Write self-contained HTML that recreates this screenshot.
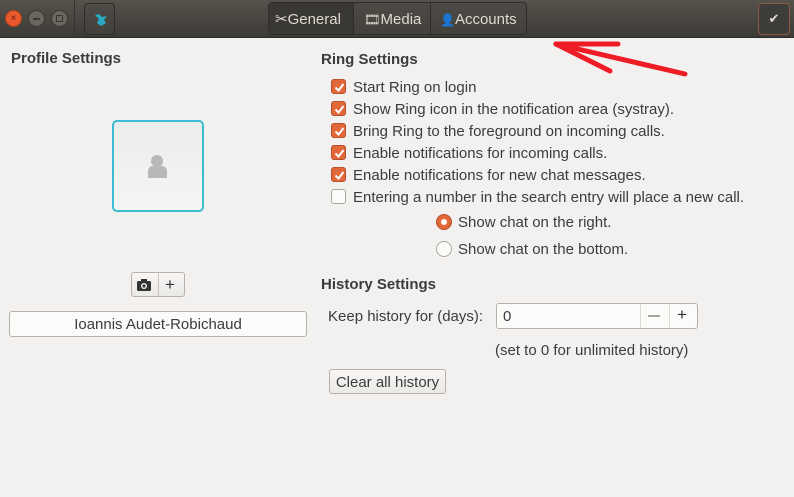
<!DOCTYPE html>
<html><head><meta charset="utf-8"><style>
*{box-sizing:border-box;margin:0;padding:0}
body{width:794px;height:497px;background:#f2f1f0;font-family:"Liberation Sans","DejaVu Sans",sans-serif;font-size:15px;color:#3c3c3c;position:relative;overflow:hidden}
.a{position:absolute;white-space:nowrap}
.hdr{left:0;top:0;width:794px;height:38px;background:linear-gradient(#55524c,#3d3b37);border-bottom:1px solid #2c2b28}
.wb{width:17px;height:17px;border-radius:50%;top:10px;background:#6a675f;border:1px solid #3a3834}
.hb{border:1px solid #2f2d2a;border-radius:4px;background:linear-gradient(#4e4b46,#43413c)}
.tab{top:3px;height:33px;color:#dfdbd2;font-size:15px;line-height:33px;padding-left:6px}
.cb{width:15px;height:15px;border-radius:3px;background:#e2683a;border:1px solid #b5502c;left:331px}
.cb svg{position:absolute;left:1px;top:1px}
.cb.off{background:#fbfbfa;border:1px solid #aaa6a0}
.lbl{left:353px}
.btn{border:1px solid #b6b1aa;border-radius:3px;background:linear-gradient(#f8f7f6,#ebe9e6)}
h3{font-size:15px;font-weight:bold;color:#3c3c3c}
</style></head><body>
<div class="a hdr"></div>
<div class="a wb" style="left:5px;background:#e9592d;border-color:#a8401e;color:#5a1d0a;font-size:10px;line-height:15px;text-align:center">×</div>
<div class="a wb" style="left:28px"><div style="position:absolute;left:4px;top:7px;width:7px;height:1.5px;background:#3a3833"></div></div>
<div class="a wb" style="left:51px"><div style="position:absolute;left:4px;top:4px;width:7px;height:7px;border:1.5px solid #3a3833"></div></div>
<div class="a" style="left:74px;top:0;width:1px;height:38px;background:#35332f"></div>
<div class="a hb" style="left:84px;top:3px;width:31px;height:32px"><svg width="31" height="32" viewBox="0 0 31 32"><path d="M10 11 L14 15 L12 19 L16 22 L21 19 L19 16 L22 12 L17 13 L14 10 Z" fill="#28a9c4"/></svg></div>
<div class="a hb" style="left:268px;top:2px;width:259px;height:33px"></div>
<div class="a" style="left:269px;top:3px;width:84px;height:31px;background:#3a3834"></div>
<div class="a" style="left:353px;top:3px;width:1px;height:31px;background:#2f2d2a"></div>
<div class="a" style="left:430px;top:3px;width:1px;height:31px;background:#2f2d2a"></div>
<div class="a tab" style="left:269px"><span style="font-size:15px">✂</span>General</div>
<div class="a tab" style="left:358px"><span style="font-size:13px">🎞</span>Media</div>
<div class="a tab" style="left:434px"><span style="font-size:12px">👤</span>Accounts</div>
<div class="a" style="left:758px;top:3px;width:32px;height:32px;border:1px solid #8a5a43;border-radius:4px;background:#3f3d39;color:#e0ddd6;text-align:center;line-height:30px;font-size:13px">✔</div>
<svg class="a" style="left:540px;top:38px" width="160" height="40"><g stroke="#ee1c24" stroke-width="5" stroke-linecap="round" fill="none"><path d="M16 6 L78 6"/><path d="M16 6 L145 36"/><path d="M16 6 L70 33"/></g></svg>

<h3 class="a" style="left:11px;top:50px">Profile Settings</h3>
<div class="a" style="left:112px;top:120px;width:92px;height:92px;border:2px solid #3bbcd0;border-radius:5px;background:linear-gradient(#ececeb,#f5f5f4)"></div>
<div class="a" style="left:151px;top:155px;width:12px;height:12px;border-radius:50%;background:#b8b8b8"></div>
<div class="a" style="left:148px;top:166px;width:19px;height:12px;border-radius:5px 5px 1px 1px;background:#b8b8b8"></div>
<div class="a btn" style="left:131px;top:272px;width:54px;height:25px"></div>
<div class="a" style="left:158px;top:273px;width:1px;height:23px;background:#c8c4be"></div>
<svg class="a" style="left:136px;top:278px" width="16" height="14"><rect x="1" y="3" width="14" height="10" rx="1.5" fill="#333"/><rect x="5" y="1" width="6" height="3" fill="#333"/><circle cx="8" cy="8" r="3" fill="#f2f1f0"/><circle cx="8" cy="8" r="1.6" fill="#333"/></svg>
<div class="a" style="left:165px;top:275px;font-size:17px;color:#333">+</div>
<div class="a" style="left:9px;top:311px;width:298px;height:26px;border:1px solid #b6b1aa;border-radius:3px;background:#fbfbfa;text-align:center;line-height:26px">Ioannis Audet-Robichaud</div>

<h3 class="a" style="left:321px;top:51px">Ring Settings</h3>
<div class="a cb" style="top:79px"><svg width="13" height="13"><path d="M2.5 6.5 L5.5 9.5 L10.5 3" stroke="#fff" stroke-width="2" fill="none"/></svg></div>
<div class="a lbl" style="top:79px">Start Ring on login</div>
<div class="a cb" style="top:101px"><svg width="13" height="13"><path d="M2.5 6.5 L5.5 9.5 L10.5 3" stroke="#fff" stroke-width="2" fill="none"/></svg></div>
<div class="a lbl" style="top:101px">Show Ring icon in the notification area (systray).</div>
<div class="a cb" style="top:123px"><svg width="13" height="13"><path d="M2.5 6.5 L5.5 9.5 L10.5 3" stroke="#fff" stroke-width="2" fill="none"/></svg></div>
<div class="a lbl" style="top:123px">Bring Ring to the foreground on incoming calls.</div>
<div class="a cb" style="top:145px"><svg width="13" height="13"><path d="M2.5 6.5 L5.5 9.5 L10.5 3" stroke="#fff" stroke-width="2" fill="none"/></svg></div>
<div class="a lbl" style="top:145px">Enable notifications for incoming calls.</div>
<div class="a cb" style="top:167px"><svg width="13" height="13"><path d="M2.5 6.5 L5.5 9.5 L10.5 3" stroke="#fff" stroke-width="2" fill="none"/></svg></div>
<div class="a lbl" style="top:167px">Enable notifications for new chat messages.</div>
<div class="a cb off" style="top:189px"></div>
<div class="a lbl" style="top:189px">Entering a number in the search entry will place a new call.</div>
<div class="a" style="left:436px;top:214px;width:16px;height:16px;border-radius:50%;background:#e2683a;border:1px solid #b5502c"><div style="position:absolute;left:4px;top:4px;width:6px;height:6px;border-radius:50%;background:#fff"></div></div>
<div class="a" style="left:458px;top:214px">Show chat on the right.</div>
<div class="a" style="left:436px;top:241px;width:16px;height:16px;border-radius:50%;background:#fbfbfa;border:1px solid #aaa6a0"></div>
<div class="a" style="left:458px;top:241px">Show chat on the bottom.</div>

<h3 class="a" style="left:321px;top:276px">History Settings</h3>
<div class="a" style="left:328px;top:308px">Keep history for (days):</div>
<div class="a" style="left:496px;top:303px;width:202px;height:26px;border:1px solid #b6b1aa;border-radius:3px;background:#fbfbfa"></div>
<div class="a" style="left:640px;top:304px;width:1px;height:24px;background:#dcd9d5"></div>
<div class="a" style="left:669px;top:304px;width:1px;height:24px;background:#dcd9d5"></div>
<div class="a" style="left:503px;top:308px">0</div>
<div class="a" style="left:648px;top:315px;width:12px;height:1.5px;background:#a8a5a0"></div>
<div class="a" style="left:677px;top:305px;font-size:17px;color:#333">+</div>
<div class="a" style="left:495px;top:342px">(set to 0 for unlimited history)</div>
<div class="a btn" style="left:329px;top:369px;width:117px;height:25px;text-align:center;line-height:25px">Clear all history</div>
</body></html>
